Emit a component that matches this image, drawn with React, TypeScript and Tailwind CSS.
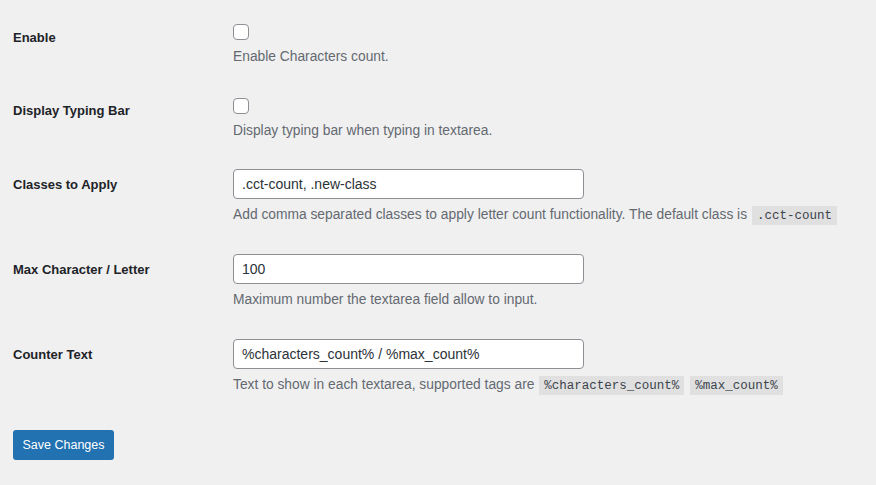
import React from "react";

const font = { fontFamily: '"Liberation Sans", Arial, sans-serif' };

function Code({ children }: { children: React.ReactNode }) {
  return (
    <code className="bg-[#e0e0e1] px-[5px] pt-[3px] pb-[2px] mx-[1px] text-[12.5px] leading-none text-[#3c434a] font-['Liberation_Mono',monospace]">
      {children}
    </code>
  );
}

function Row({
  label,
  children,
  className = "",
  labelTop = "pt-[22px]",
}: {
  label: string;
  children: React.ReactNode;
  className?: string;
  labelTop?: string;
}) {
  return (
    <div className={`flex ${className}`}>
      <div
        className={`w-[210px] shrink-0 ${labelTop} pr-[10px] text-[13px] leading-[18px] font-bold text-[#1d2327]`}
      >
        {label}
      </div>
      <div className="pl-[10px] pt-[15px] flex flex-col">{children}</div>
    </div>
  );
}

function Check() {
  return (
    <input
      type="checkbox"
      className="appearance-none block w-4 h-4 bg-white border border-[#8c8f94] rounded-[4px]"
    />
  );
}

function TextField({ value }: { value: string }) {
  return (
    <input
      type="text"
      defaultValue={value}
      className="block w-[351px] h-[30px] px-2 bg-white border border-[#8c8f94] rounded-[4px] text-[14px] text-[#2c3338] outline-none"
      style={font}
    />
  );
}

function Desc({ children, className = "mt-[5px]" }: { children: React.ReactNode; className?: string }) {
  return (
    <p className={`${className} text-[13.8px] leading-[21px] text-[#646970] whitespace-nowrap`}>
      {children}
    </p>
  );
}

export default function App() {
  return (
    <div className="min-h-[485px] w-full bg-[#f0f0f1] pl-[13px] pt-[9px]" style={font}>
      <Row label="Enable" className="pb-[16px]" labelTop="pt-[20px]">
        <Check />
        <Desc className="mt-[6px]">Enable Characters count.</Desc>
      </Row>
      <Row label="Display Typing Bar" className="pb-[13px]" labelTop="pt-[19px]">
        <Check />
        <Desc className="mt-[6px]">Display typing bar when typing in textarea.</Desc>
      </Row>
      <Row label="Classes to Apply" className="pb-[14px]">
        <TextField value=".cct-count, .new-class" />
        <Desc>
          Add comma separated classes to apply letter count functionality. The default class is{" "}
          <Code>.cct-count</Code>
        </Desc>
      </Row>
      <Row label="Max Character / Letter" className="pb-[14px]">
        <TextField value="100" />
        <Desc>Maximum number the textarea field allow to input.</Desc>
      </Row>
      <Row label="Counter Text" className="pb-[14px]">
        <TextField value="%characters_count% / %max_count%" />
        <Desc>
          Text to show in each textarea, supported tags are <Code>%characters_count%</Code>{" "}
          <Code>%max_count%</Code>
        </Desc>
      </Row>
      <div className="pt-[21px]">
        <button className="h-[30px] w-[101px] rounded-[3px] bg-[#2271b1] text-white text-[12.5px]">
          Save Changes
        </button>
      </div>
    </div>
  );
}
